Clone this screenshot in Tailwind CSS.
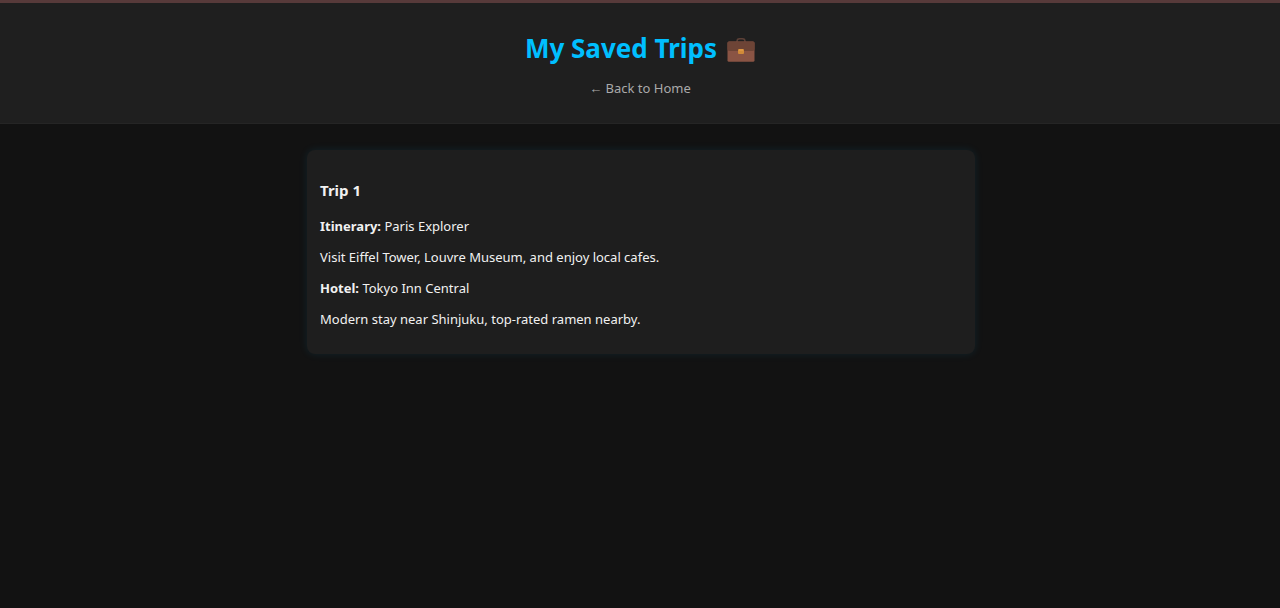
<!DOCTYPE html>
<html lang="en">
<head>
<meta charset="utf-8">
<meta name="viewport" content="width=device-width, initial-scale=1">
<title>My Saved Trips</title>
<script src="https://cdn.jsdelivr.net/npm/@tailwindcss/browser@4"></script>
</head>
<body class="min-h-screen bg-[#121212] font-['Segoe_UI','Noto_Sans',sans-serif] text-[13px] leading-[18px] text-[#f1f1f1]">
  <header class="border-t-3 border-b border-t-[#573a3a] border-b-[#252525] bg-[#1f1f1f] px-4 pt-[27px] pb-[26px] text-center">
    <h1 class="flex items-center justify-center gap-[10px] text-[26px] leading-9 font-bold text-[#00bfff]">
      My Saved Trips
      <svg class="h-7 w-7" viewBox="0 0 28 28" role="img" aria-label="Briefcase">
        <path d="M10 8V7.500Q10 4.800 12.500 4.800H15.500Q18 4.800 18 7.500V8" fill="none" stroke="#5d4037" stroke-width="1.500"/>
        <rect x="0.500" y="7.500" width="27" height="20.300" rx="1.500" fill="#8a5444"/>
        <path d="M.500 9Q.500 7.500 2 7.500H26Q27.500 7.500 27.500 9V15Q27.500 17 25.500 17H2.500Q.500 17 .500 15Z" fill="#6d4436"/>
        <rect x="11" y="15" width="6" height="5" rx="1" fill="#d18a38"/>
        <path d="M12 16H16" stroke="#eba34a" stroke-width="1"/>
      </svg>
    </h1>
    <a href="#" class="mt-[13px] inline-block text-[#aaaaaa]">← Back to Home</a>
  </header>
  <main class="pt-[26px] pr-4 pl-[18px]">
    <article class="mx-auto max-w-[668px] rounded-lg bg-[#1e1e1e] px-[13px] pt-[30px] pb-[26px] shadow-[0_0_8px_rgba(0,191,255,0.10)]">
      <h2 class="mb-[17px] text-[15px] leading-5 font-bold">Trip 1</h2>
      <div class="flex flex-col gap-[13px]">
        <p><strong>Itinerary:</strong> Paris Explorer</p>
        <p>Visit Eiffel Tower, Louvre Museum, and enjoy local cafes.</p>
        <p><strong>Hotel:</strong> Tokyo Inn Central</p>
        <p>Modern stay near Shinjuku, top-rated ramen nearby.</p>
      </div>
    </article>
  </main>
</body>
</html>
